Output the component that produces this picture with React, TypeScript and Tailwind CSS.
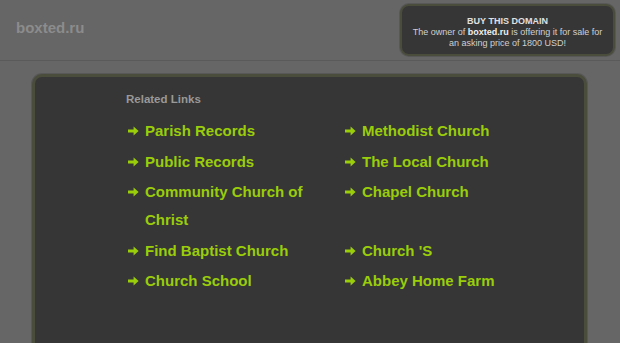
import React from "react";

const left: string[] = ["Parish Records", "Public Records", "Community Church of Christ", "Find Baptist Church", "Church School"];
const right: string[] = ["Methodist Church", "The Local Church", "Chapel Church", "Church 'S", "Abbey Home Farm"];

function LinkItem({ text }: { text: string }) {
  return (
    <div className="flex items-start">
      <span className="flex h-[28px] w-[17px] shrink-0 items-center">
        <svg width="11" height="10" viewBox="0 0 11 10" fill="currentColor">
          <path d="M0 3.6 H5.6 V0.6 L10.6 5 L5.6 9.4 V6.4 H0 Z" />
        </svg>
      </span>
      <span className="text-[15px] leading-[28px] font-bold">{text}</span>
    </div>
  );
}

export default function App() {
  return (
    <div className="h-[343px] w-[620px] overflow-hidden bg-[#666666]" style={{ fontFamily: '"Liberation Sans", Arial, sans-serif' }}>
      <div className="flex h-[61px] items-start justify-between border-b border-[#5a5a5a]">
        <div className="pl-[16px] pt-[18px] text-[15px] font-bold leading-[20px] text-[#8c8c8c]">boxted.ru</div>
        <div className="mr-[5px] mt-[4px] flex h-[52px] w-[215px] flex-col items-center justify-center rounded-[9px] border-2 border-[#4a4c3c] bg-[#363636] pt-[5px] shadow-[0_0_0_1px_#585858] text-center">
          <div className="text-[9px] font-bold leading-[11px] text-[#e0e0e0]">BUY THIS DOMAIN</div>
          <div className="text-[9px] leading-[11.5px] text-[#d0d0d0]">
            The owner of <b className="text-[#eeeeee]">boxted.ru</b> is offering it for sale for
          </div>
          <div className="text-[9px] leading-[11px] text-[#d0d0d0]">an asking price of 1800 USD!</div>
        </div>
      </div>
      <div className="ml-[32px] mt-[13px] h-[300px] w-[555px] rounded-[10px] border-[3px] border-[#4a4c3c] bg-[#363636] shadow-[0_0_0_1px_#585858]">
        <div className="pl-[91px] pt-[15px]">
          <div className="text-[11.5px] font-bold leading-[14px] text-[#999999]">Related Links</div>
          <div className="mt-[11px] grid grid-cols-[217px_1fr] gap-y-[2.5px] pl-[2px] text-[#9acd0a]">
            {left.map((l, i) => (
              <React.Fragment key={i}>
                <div className="pr-[40px]"><LinkItem text={l} /></div>
                <div><LinkItem text={right[i]} /></div>
              </React.Fragment>
            ))}
          </div>
        </div>
      </div>
    </div>
  );
}
